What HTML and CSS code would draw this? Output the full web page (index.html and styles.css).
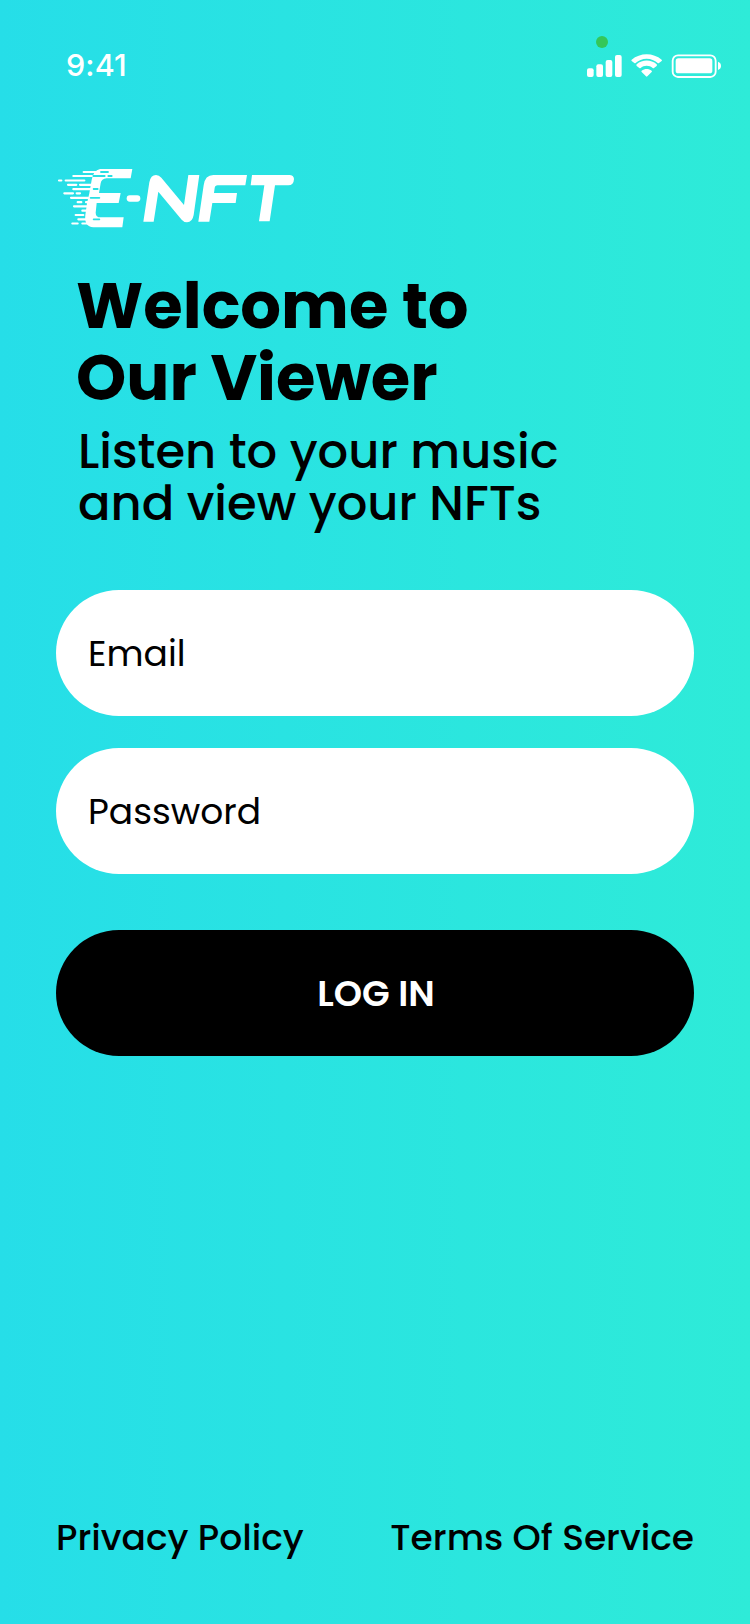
FILE: index.html
```html
<!DOCTYPE html>
<html lang="en">
<head>
<meta charset="utf-8">
<title>E-NFT Viewer</title>
<link rel="stylesheet" href="styles.css">
</head>
<body>
<main class="screen">
  <header class="status">
    <span class="time">9:41</span>
    <svg class="indicators" viewBox="0 0 540 195" aria-hidden="true">
      <circle cx="96" cy="51" r="18" fill="#34c759"/>
      <g fill="#fff">
        <rect x="51" y="130" width="20" height="26" rx="6"/>
        <rect x="79" y="118" width="20" height="38" rx="6"/>
        <rect x="107" y="105" width="20" height="51" rx="6"/>
        <rect x="135" y="90" width="20" height="66" rx="6"/>
        <path d="M230 101c13 0 24 5 33 13q2 2 4 0l8-6q2-2 0-4c-25-22-65-22-90 0q-2 2 0 4l8 6q2 2 4 0c9-8 20-13 33-13z"/>
        <path d="M230 122c7 0 13 2 18 7q2 2 4 0l8-6q2-3 0-5c-17-15-43-15-60 0q-2 2 0 5l8 6q2 2 4 0c5-5 11-7 18-7z"/>
        <path d="M245 141q2-2 0-4c-9-7-21-7-30 0q-2 2 0 4l13 13q2 2 4 0z"/>
        <rect x="317" y="100" width="110" height="45" rx="8"/>
        <path d="M444 110v25q9-3 9-12.500t-9-12.500z"/>
      </g>
      <rect x="308" y="91" width="129" height="65" rx="16" fill="none" stroke="#fff" stroke-width="5.500"/>
    </svg>
  </header>

  <svg class="logo" viewBox="0 0 750 225" role="img" aria-label="E-NFT">
    <g fill="#fff">
      <path d="M150 27H247L242 55H170Q154 57 152 70L147 99H212L206 129H140L137 158Q137 172 152 172H221L217 202H130Q102 200 106 165L111 130L118 100L125 60Q130 32 150 27z"/>
      <rect x="230" y="106" width="41" height="19" rx="9.500"/>
      <path d="M280 185L298 67Q302 45 318 45Q327 45 334 53L402 135L415 45H448L431 165Q427 187 411 187Q402 187 395 179L325 95L311 185z"/>
      <path d="M445 185L461 76Q465 45 490 45H591L586 76H503Q495 76 494 84L492 99H561L557 129H487L478 185z"/>
      <path d="M606 45H718Q731 45 732 57Q731 76 715 76H675L659 184H627L643 76H602z"/>
    </g>
    <g class="streaks">
      <path d="M101 36H155M70 48H135M27 61.500H34M47 61.500H103M54 74.500H79M90 74.500H130M70 87.500H125M43 100H69M80 100H90M63 113.500H115M83 126.500H94M108 126.500H130M72 139H115M97 152H115M77 165H100M67 190.500H83M97 190.500H115M85 178H112"/>
    </g>
    <g class="cuts">
      <path d="M153 36H174M130 48H164M175 48H185M131 87H143M122 113.500H148M131 178H148"/>
    </g>
  </svg>

  <section class="intro">
    <h1 class="title">Welcome to<br>Our Viewer</h1>
    <p class="lead">Listen to your music<br>and view your NFTs</p>
  </section>

  <form class="form">
    <label class="field">Email</label>
    <label class="field">Password</label>
    <button class="login" type="button">LOG IN</button>
  </form>

  <footer class="links">
    <a>Privacy Policy</a>
    <a>Terms Of Service</a>
  </footer>
</main>
</body>
</html>
```
FILE: styles.css
```css
* { box-sizing: border-box; }
body { margin: 0; }
.screen {
  width: 750px;
  height: 1624px;
  display: flex;
  flex-direction: column;
  color: #000;
  background: linear-gradient(90deg, #26dee8 0%, #2eebd8 100%);
  font-family: Poppins, Inter, "Open Sans", sans-serif;
}
.status {
  height: 90px;
  padding: 25px 0 0 66px;
  display: flex;
  justify-content: space-between;
  flex: none;
}
.time {
  padding-top: 22px;
  font: 550 30.5px/36px Inter, sans-serif;
  letter-spacing: 0.1px;
  color: #fff;
}
.indicators { width: 180px; height: 65px; }
.logo {
  width: 250px;
  height: 75px;
  margin: 70px 0 0 50px;
  flex: none;
}
.streaks path { fill: none; stroke: #fff; stroke-width: 6.5; stroke-linecap: round; }
.cuts path { fill: none; stroke: #28e0e4; stroke-width: 5.5; stroke-linecap: round; }
.intro { padding: 35px 0 0 76px; height: 355px; flex: none; white-space: nowrap; }
.title { margin: 0; font-size: 64px; line-height: 72px; font-weight: 700; }
.lead { margin: 12px 0 0 2px; font-size: 48px; line-height: 52px; font-weight: 500; }
.form { padding: 0 56px; display: flex; flex-direction: column; }
.field, .login { height: 126px; border-radius: 63px; font-size: 36px; line-height: 42px; }
.field {
  display: flex;
  align-items: center;
  padding: 1px 32px 0;
  margin-bottom: 32px;
  background: #fff;
  font-weight: 400;
}
.login {
  margin-top: 24px;
  padding: 1px 0 0 2px;
  border: 0;
  background: #000;
  color: #fff;
  font-family: inherit;
  font-weight: 600;
}
.links {
  margin-top: auto;
  padding: 0 56px 65px;
  display: flex;
  justify-content: space-between;
  font-size: 36px;
  line-height: 42px;
  font-weight: 500;
}
```
